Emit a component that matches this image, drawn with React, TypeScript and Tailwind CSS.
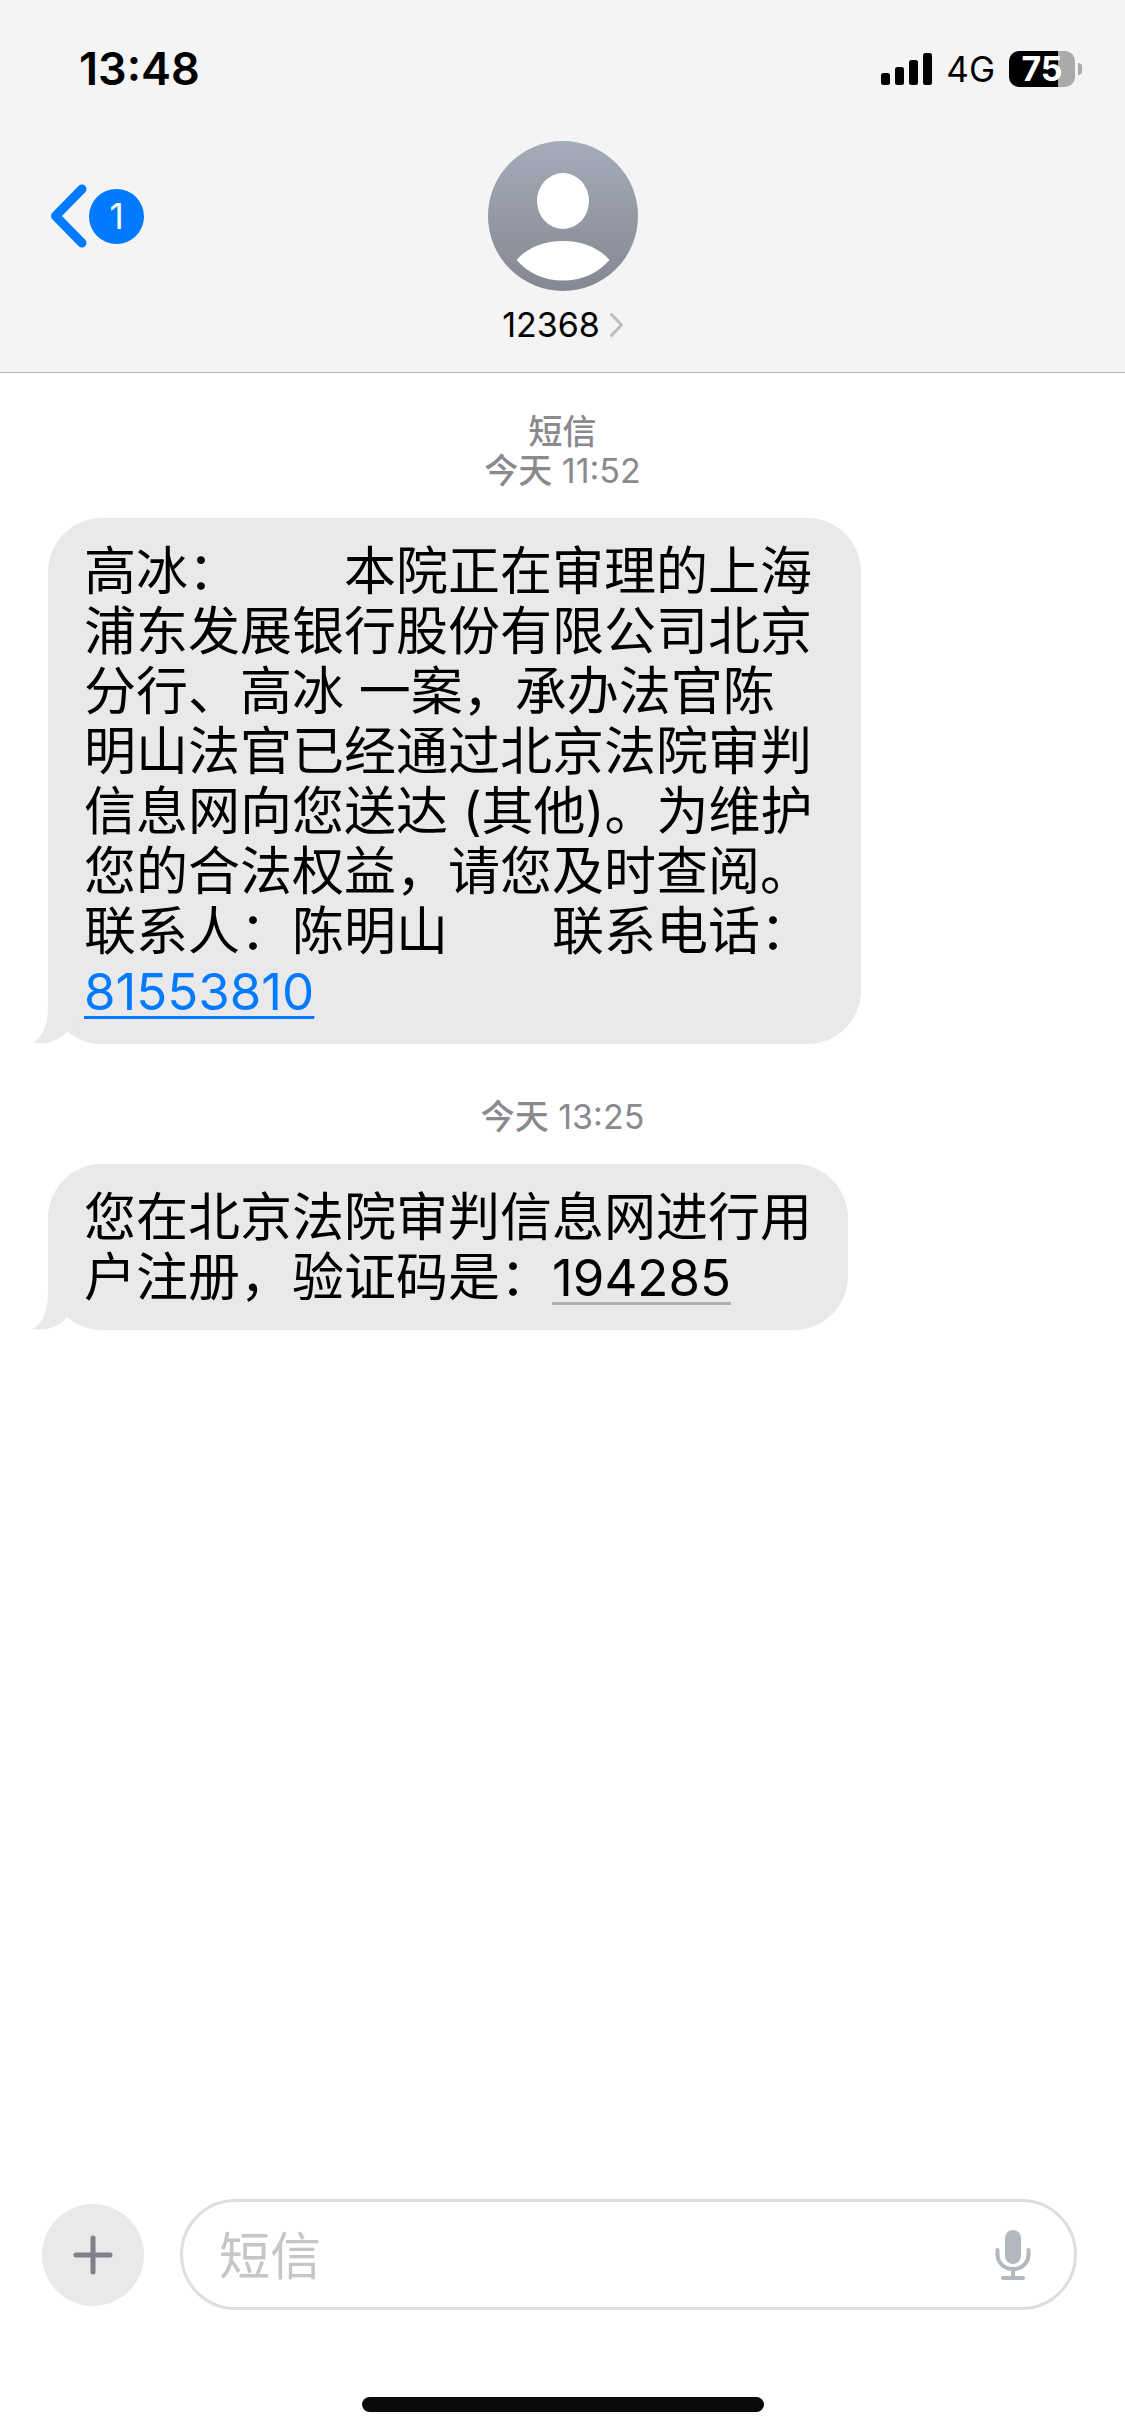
import React, { useState } from "react";

const BackIcon = () => (
  <svg width="37" height="64" viewBox="0 0 37 64" fill="none" aria-hidden="true">
    <path
      d="M32 5L5.500 32L32 59"
      stroke="#007aff"
      strokeWidth="9"
      strokeLinecap="round"
      strokeLinejoin="round"
    />
  </svg>
);

const SignalIcon = () => (
  <svg width="51" height="34" viewBox="0 0 51 34" aria-hidden="true">
    <rect x="0" y="21" width="9" height="12" rx="2.500" />
    <rect x="14" y="15" width="9" height="18" rx="2.500" />
    <rect x="28" y="8" width="9" height="25" rx="2.500" />
    <rect x="42" y="1" width="9" height="32" rx="2.500" />
  </svg>
);

const Avatar = () => (
  <svg width="150" height="150" viewBox="0 0 150 150" aria-hidden="true">
    <defs>
      <linearGradient id="avatarFill" x1="0" y1="0" x2="0" y2="1">
        <stop offset="0" stopColor="#a5abb9" />
        <stop offset="1" stopColor="#858892" />
      </linearGradient>
    </defs>
    <circle cx="75" cy="75" r="75" fill="url(#avatarFill)" />
    <ellipse cx="75" cy="60" rx="26" ry="28" fill="#fff" />
    <path d="M28.500 119C39 107 55 100 75 100S111 107 121.500 119C110 132 94 139.500 75 139.500S40 132 28.500 119Z" fill="#fff" />
  </svg>
);

const MicIcon = () => (
  <svg width="36" height="52" viewBox="0 0 36 52" fill="none" aria-hidden="true">
    <rect x="10" y="1" width="16" height="34" rx="8" fill="#b2b7c0" />
    <path
      d="M2.500 21V25C2.500 34 9 40 18 40S33.500 34 33.500 25V21M18 40V48M8 49H28"
      stroke="#b2b7c0"
      strokeWidth="4"
      strokeLinecap="round"
    />
  </svg>
);

const BubbleTail = () => (
  <svg
    className="absolute bottom-0 -left-4"
    width="52"
    height="48"
    viewBox="0 0 52 48"
    aria-hidden="true"
  >
    <path d="M16 0V10C16 27 12 40 1 47C15 49 27 45 35 35L52 18V0Z" fill="#e9e9eb" />
  </svg>
);

interface BubbleProps {
  children: React.ReactNode;
}

const Bubble: React.FC<BubbleProps> = ({ children }) => (
  <div className="relative w-fit max-w-[813px] ml-12 px-9 pt-6 pb-[22px] rounded-[54px] bg-[#e9e9eb] text-[52px] leading-[60px] text-black">
    <BubbleTail />
    <p className="relative [text-spacing-trim:space-all]">{children}</p>
  </div>
);

const App: React.FC = () => {
  const [draft, setDraft] = useState("");

  return (
    <div
      lang="zh-CN"
      className="min-h-screen flex flex-col bg-white font-['Inter','Noto_Sans_CJK_SC',sans-serif]"
    >
      <header className="bg-[#f4f4f4] border-b border-[#b0b0b0] pb-7">
        {/* Status bar */}
        <div className="h-[138px] pl-[79px] pr-[43px] flex items-center justify-between">
          <time className="text-[45px] leading-[54px] font-semibold">13:48</time>
          <div className="flex items-center gap-[14px]">
            <SignalIcon />
            <span className="text-[35px] leading-[42px]">4G</span>
            <div className="flex items-center gap-[3px]">
              <div className="w-[66px] h-9 rounded-[10px] bg-linear-to-r from-black from-75% to-[#aaaaaa] to-75% flex items-center justify-center text-white text-[34px] leading-9 font-bold">
                75
              </div>
              <div className="w-1 h-3 rounded-r-full bg-[#aaaaaa]" />
            </div>
          </div>
        </div>

        {/* Conversation header */}
        <nav className="grid grid-cols-[1fr_auto_1fr] items-start px-[50px] pt-[3px]">
          <button type="button" aria-label="返回" className="h-[150px] w-fit flex items-center gap-[2px]">
            <BackIcon />
            <span className="size-[55px] rounded-full bg-[#007aff] text-white text-[35px] leading-[42px] flex items-center justify-center">
              1
            </span>
          </button>
          <button type="button" className="flex flex-col items-center gap-[14px]">
            <Avatar />
            <span className="flex items-center gap-[10px] text-[34px] leading-[39px] text-black">
              12368
              <svg width="13" height="24" viewBox="0 0 13 24" fill="none" aria-hidden="true">
                <path d="M1.500 1.500L11.500 12L1.500 22.500" stroke="#bdbdbf" strokeWidth="3" strokeLinecap="round" strokeLinejoin="round" />
              </svg>
            </span>
          </button>
        </nav>
      </header>

      <main className="flex-1">
        <div className="pt-[39px] pb-7 text-center text-[34px] leading-[39px] text-[#8a8a8e]">
          <p className="font-medium">短信</p>
          <p>
            <span className="font-medium">今天</span> 11:52
          </p>
        </div>
        <Bubble>
          {"高冰：\u3000\u3000本院正在审理的上海浦东发展银行股份有限公司北京分行、高冰 一案，承办法官陈明山法官已经通过北京法院审判信息网向您送达 (其他)。为维护您的合法权益，请您及时查阅。"}
          <br />
          {"联系人：陈明山\u3000\u3000联系电话："}
          <br />
          <a
            href="tel:81553810"
            className="text-[51px] text-[#007aff] underline decoration-[3px] underline-offset-[6px]"
          >
            81553810
          </a>
        </Bubble>

        <div className="pt-[53px] pb-7 text-center text-[34px] leading-[39px] text-[#8a8a8e]">
          <p>
            <span className="font-medium">今天</span> 13:25
          </p>
        </div>
        <Bubble>
          您在北京法院审判信息网进行用
          <br />
          户注册，验证码是：
          <span className="text-[51px] underline decoration-[3px] decoration-[#b0b0b3] underline-offset-[6px]">
            194285
          </span>
        </Bubble>
      </main>

      <footer>
        <form
          onSubmit={(e) => {
            e.preventDefault();
            setDraft("");
          }}
          className="flex items-center gap-9 pl-[42px] pr-12"
        >
          <button
            type="button"
            aria-label="添加"
            className="size-[102px] shrink-0 rounded-full bg-[#e8e9eb] flex items-center justify-center"
          >
            <svg width="40" height="40" viewBox="0 0 40 40" fill="none" aria-hidden="true">
              <path d="M20 3V37M3 20H37" stroke="#7f8088" strokeWidth="5" strokeLinecap="round" />
            </svg>
          </button>
          <div className="flex-1 min-w-0 h-[111px] pl-9 pr-[43px] flex items-center border-[3px] border-[#dedede] rounded-full">
            <input
              type="text"
              aria-label="短信"
              placeholder="短信"
              value={draft}
              onChange={(e) => setDraft(e.target.value)}
              className="flex-1 min-w-0 pt-1 bg-transparent outline-none text-[51px] leading-[60px] placeholder:text-[#c6c6c8]"
            />
            <button type="button" aria-label="听写" className="shrink-0">
              <MicIcon />
            </button>
          </div>
        </form>
        {/* Home indicator */}
        <div className="pt-[87px] pb-6">
          <div className="mx-auto w-[402px] h-[15px] rounded-full bg-[#0a0a0a]" />
        </div>
      </footer>
    </div>
  );
};

export default App;
